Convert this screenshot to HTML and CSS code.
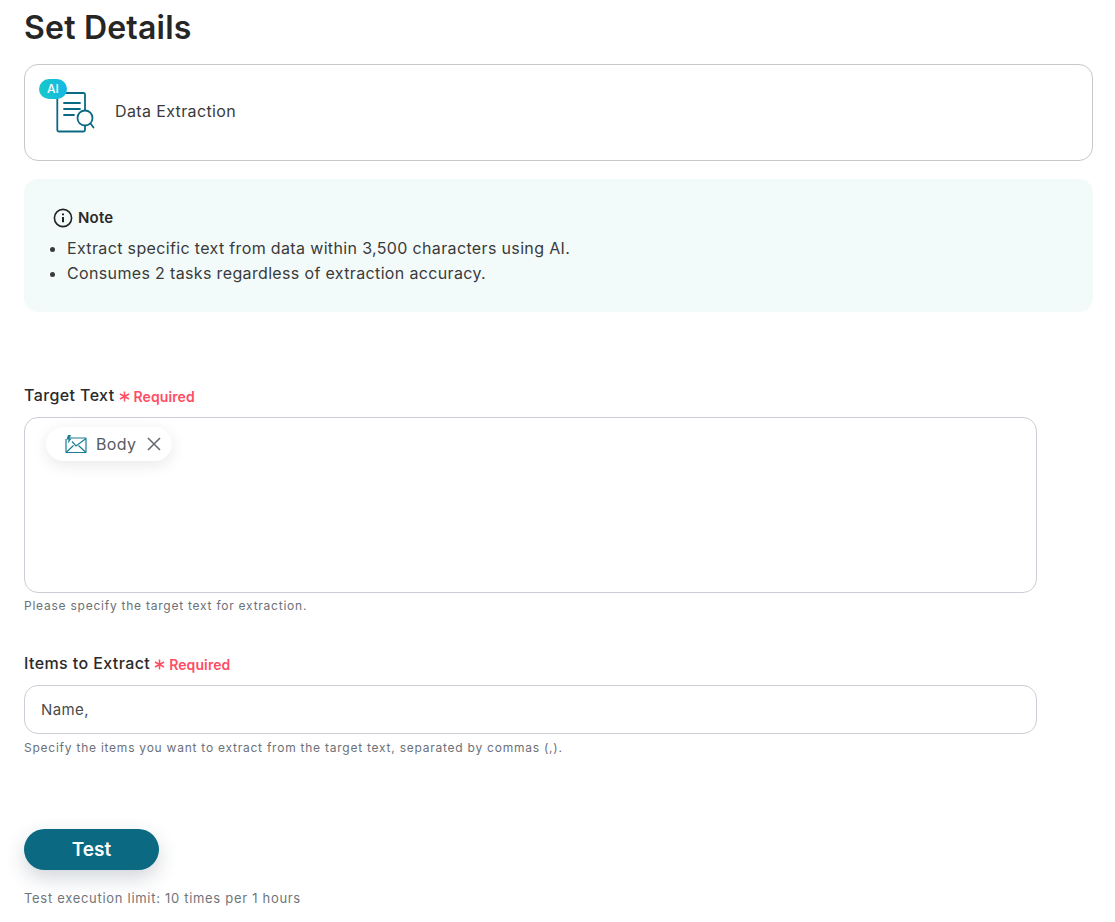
FILE: index.html
```html
<!DOCTYPE html>
<html lang="en">
<head>
<meta charset="utf-8">
<title>Set Details</title>
<link rel="stylesheet" href="styles.css">
</head>
<body>
<main class="page">
  <h1 class="title">Set Details</h1>
  <section class="action-card">
    <div class="action-icon">
      <svg class="doc" width="42" height="42" viewBox="0 0 42 42" fill="none" stroke="#0b6a82" stroke-width="1.8" stroke-linecap="round">
        <path d="M29 18V2.500a1.500 1.500 0 0 0-1.500-1.500H2.800a1.500 1.500 0 0 0-1.500 1.500V38a1.500 1.500 0 0 0 1.500 1.500H27.500a1.500 1.500 0 0 0 1.500-1.500v-4"/>
        <path d="M8 11h16M8 17h16M8 23h10"/>
        <circle cx="29" cy="26" r="7.500"/>
        <path d="M34.500 31.500L37.500 35.500"/>
      </svg>
      <span class="ai-badge">AI</span>
    </div>
    <span class="action-name">Data Extraction</span>
  </section>
  <section class="note">
    <div class="note-head">
      <svg width="20" height="20" viewBox="0 0 20 20" fill="none" stroke="#222" stroke-width="1.6">
        <circle cx="10" cy="10" r="8.600"/>
        <path d="M10 9v5.200" stroke-width="2"/>
        <path d="M10 5.400v1.800" stroke-width="2"/>
      </svg>
      <span>Note</span>
    </div>
    <ul class="note-list">
      <li>Extract specific text from data within 3,500 characters using AI.</li>
      <li>Consumes 2 tasks regardless of extraction accuracy.</li>
    </ul>
  </section>
  <section class="field field-first">
    <div class="label">Target Text
      <span class="req">
        <svg class="star" width="11" height="11" viewBox="0 0 11 11" fill="none" stroke="#ff4d64" stroke-width="1.500">
          <path d="M5.500 0.500v10M1 3l9 5M10 3L1 8"/>
        </svg>Required</span>
    </div>
    <div class="textarea">
      <span class="chip">
        <svg width="22" height="19" viewBox="0 0 22 19" fill="none" stroke="#1a7d94" stroke-width="1.200">
          <path d="M5 3H20.500a.5.5 0 0 1 .5.5V17a.5.5 0 0 1-.5.5H1.500A.5.5 0 0 1 1 17V4"/>
          <path d="M1 17.500L8.500 10.500M21 17.500L13.500 10.500M7 6.500L11 11l10-7.500"/>
          <path d="M3 0L1.500 4.500h2L3 8.500l3.500-5h-2L6 0z" fill="#1a7d94" stroke="none"/>
        </svg>
        <span class="chip-text">Body</span>
        <svg class="chip-x" width="14" height="14" viewBox="0 0 14 14" fill="none" stroke="#666c72" stroke-width="1.600">
          <path d="M1 1l12 12M13 1L1 13"/>
        </svg>
      </span>
    </div>
    <p class="hint">Please specify the target text for extraction.</p>
  </section>
  <section class="field field-second">
    <div class="label">Items to Extract
      <span class="req">
        <svg class="star" width="11" height="11" viewBox="0 0 11 11" fill="none" stroke="#ff4d64" stroke-width="1.500">
          <path d="M5.500 0.500v10M1 3l9 5M10 3L1 8"/>
        </svg>Required</span>
    </div>
    <div class="input">Name,</div>
    <p class="hint hint-second">Specify the items you want to extract from the target text, separated by commas (,).</p>
  </section>
  <button class="test-btn" type="button">Test</button>
  <p class="limit">Test execution limit: 10 times per 1 hours</p>
</main>
</body>
</html>
```
FILE: styles.css
```css
* { box-sizing: border-box; }
html, body { margin: 0; background: #fff; }
body { font-family: Inter, "Liberation Sans", sans-serif; color: #222; }
.page { width: 1115px; height: 922px; padding: 0 22px 0 24px; overflow: hidden; }
.title { margin: 0; padding-top: 9px; height: 64px; font-size: 32px; line-height: 38px; font-weight: 600; letter-spacing: 0.2px; color: #262626; }
.action-card { height: 97px; border: 1px solid #c8c8c8; border-radius: 14px; display: flex; align-items: flex-start; padding: 14px 0 0 14px; }
.action-icon { position: relative; width: 60px; height: 60px; margin-right: 16px; flex: none; }
.doc { position: absolute; left: 17px; top: 13px; }
.ai-badge { position: absolute; left: 0; top: 0; width: 28px; height: 20px; border-radius: 10px; background: linear-gradient(90deg, #18c8c8, #14b8e4); color: #fff; font-size: 12px; line-height: 20px; font-weight: 500; text-align: center; }
.action-name { font-size: 16px; line-height: 24px; letter-spacing: 0.37px; color: #3a3a3a; margin-top: 20px; }
.note { margin-top: 18px; height: 133px; background: #f3fbfa; border-radius: 14px; padding: 29px 28px 0 29px; }
.note-head { display: flex; align-items: center; gap: 5px; font-size: 15px; font-weight: 600; line-height: 20px; letter-spacing: 0.2px; color: #2a2a2a; }
.note-list { margin: 8px 0 0; padding: 0 0 0 14px; font-size: 16px; line-height: 25px; letter-spacing: 0.35px; color: #3a3a3a; }
.field-first { margin-top: 74px; }
.field-second { margin-top: 40px; }
.label { height: 20px; font-size: 16px; line-height: 18px; font-weight: 500; letter-spacing: 0.4px; display: flex; align-items: flex-start; gap: 4px; color: #2a2a2a; }
.req { color: #ff4d64; font-size: 14px; line-height: 21px; font-weight: 600; display: inline-flex; align-items: center; gap: 4px; letter-spacing: 0.1px; }
.star { flex: none; }
.textarea { margin-top: 11px; width: 1013px; height: 176px; border: 1px solid #ccced6; border-radius: 14px; padding: 9px 21px; }
.chip { display: inline-flex; align-items: center; height: 34px; border-radius: 17px; background: #fff; box-shadow: 0 4px 16px rgba(0, 0, 0, 0.09); padding: 0 11px 0 19px; }
.chip-text { margin-left: 9px; font-size: 16px; letter-spacing: 0.35px; color: #555b63; }
.chip-x { margin-left: 11px; }
.input { margin-top: 11px; width: 1013px; height: 49px; border: 1px solid #ccced6; border-radius: 14px; padding: 0 16px; display: flex; align-items: center; font-size: 15px; letter-spacing: 0.4px; color: #4a4a4a; }
.hint { margin: 5px 0 0; font-size: 12px; line-height: 16px; letter-spacing: 0.76px; color: #6b7178; }
.hint-second { margin-top: 6px; }
.test-btn { display: block; margin-top: 73px; width: 135px; height: 41px; border: 0; border-radius: 21px; background: #0b6a82; color: #fff; font: 600 19px Inter, "Liberation Sans", sans-serif; box-shadow: 0 8px 20px rgba(30, 50, 70, 0.2); }
.limit { margin: 19px 0 0; font-size: 13px; line-height: 18px; letter-spacing: 0.7px; color: #70757a; }
```
